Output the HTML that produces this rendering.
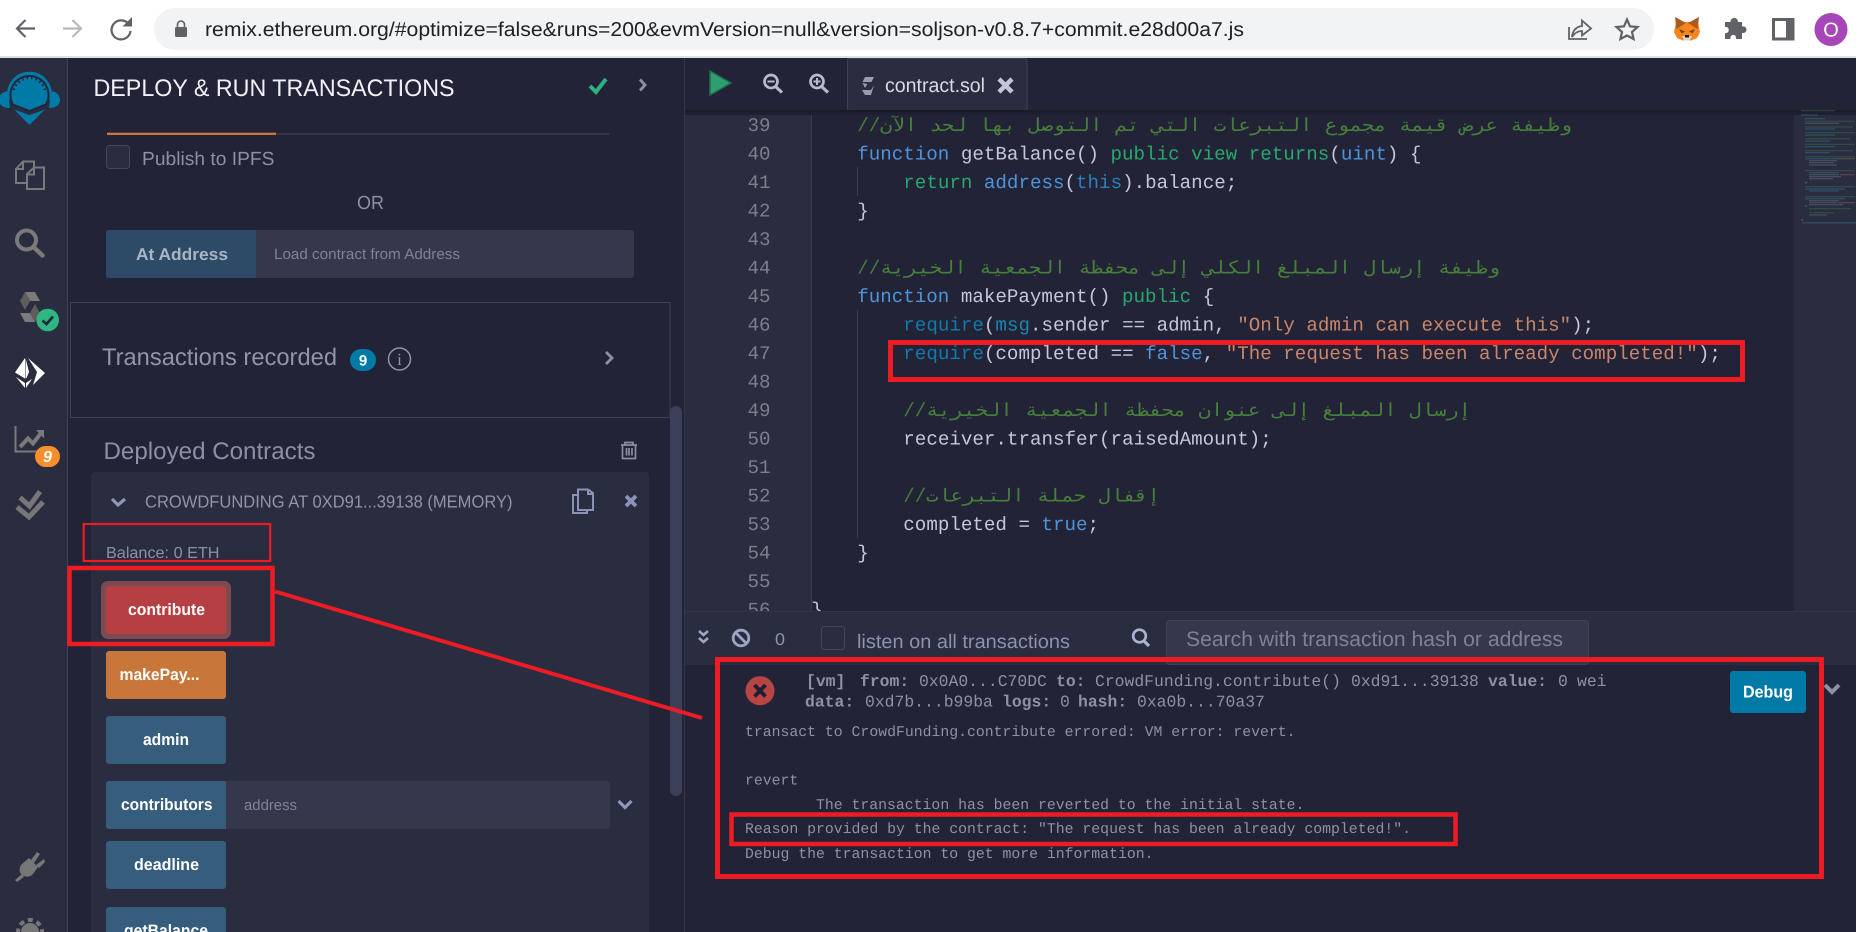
<!DOCTYPE html>
<html><head><meta charset="utf-8"><title>Remix</title>
<style>
html,body{margin:0;padding:0;background:#fff;width:1868px;height:932px;overflow:hidden}
svg{display:block}
text{white-space:pre;text-rendering:geometricPrecision}
.s{font-family:"Liberation Sans","DejaVu Sans",sans-serif}
.m{font-family:"Liberation Mono","DejaVu Sans Mono",monospace;font-size:19.2px;fill:#c3c6de}
.t{font-family:"Liberation Mono","DejaVu Sans Mono",monospace;font-size:16.4px;fill:#8e90a8}
.tb{font-family:"Liberation Mono","DejaVu Sans Mono",monospace;font-size:16.4px;fill:#8e90a8;font-weight:bold}
.l{font-family:"Liberation Mono","DejaVu Sans Mono",monospace;font-size:14.8px;fill:#8e90a8}
.n{font-family:"Liberation Mono",monospace;font-size:19.2px;fill:#7c7f8e}
.c{font-family:"DejaVu Sans Mono","DejaVu Sans",sans-serif;font-size:18px;fill:#467f3a}
.cs{font-family:"Liberation Mono",monospace;font-size:19.2px;fill:#467f3a}
.k{fill:#4e94d8}.g{fill:#27a86e}.r{fill:#0f7bab}.st{fill:#c9866a}.y{fill:#d8cfa8}
</style></head><body>
<svg width="1868" height="932" viewBox="0 0 1868 932" xmlns="http://www.w3.org/2000/svg">
<!-- browser chrome -->
<rect width="1868" height="932" fill="#fff"/>
<rect x="0" y="56" width="1856" height="2" fill="#dee1e6"/>
<rect x="154" y="8" width="1500" height="42" rx="21" fill="#f1f3f4"/>
<g fill="none" stroke-linecap="butt">
<path d="M35 28.500H17M25.500 20L17 28.500L25.500 37" stroke="#5f6368" stroke-width="2.200"/>
<path d="M63 28.500H81M72.500 20L81 28.500L72.500 37" stroke="#b6b9bd" stroke-width="2.200"/>
<path d="M128.500 24A9.500 9.500 0 1 0 130.500 31" stroke="#5f6368" stroke-width="2.200"/>
</g>
<path d="M122.500 26.500H132V17z" fill="#5f6368"/>
<rect x="175" y="27" width="12" height="10" rx="1.500" fill="#5f6368"/>
<path d="M177.500 27v-2.500a3.500 3.500 0 0 1 7 0V27" fill="none" stroke="#5f6368" stroke-width="1.600"/>
<text class="s" x="205" y="36" font-size="20" fill="#202124" textLength="1039" lengthAdjust="spacingAndGlyphs">remix.ethereum.org/#optimize=false&amp;runs=200&amp;evmVersion=null&amp;version=soljson-v0.8.7+commit.e28d00a7.js</text>
<g fill="none" stroke="#5f6368" stroke-width="1.800">
<path d="M1569 27V39H1587"/>
<path d="M1572 37C1572.500 30 1577 26.500 1582 26V20.500L1591 28.500L1582 35.500V31C1577.500 31 1574.500 33 1572 37Z"/>
<path d="M1627 19.500L1630 26.300L1637.500 27L1632 32L1633.600 39L1627 35.500L1620.400 39L1622 32L1616.500 27L1624 26.300Z" stroke-width="2.200"/>
</g>
<!-- fox -->
<g>
<path d="M1676 22H1698L1700 32L1697 38L1691 40.500H1683L1677 38L1674 32Z" fill="#f6851b"/>
<path d="M1675 17L1686 23L1676.500 29Z" fill="#a85a20"/>
<path d="M1699 17L1688 23L1697.500 29Z" fill="#a85a20"/>
<path d="M1679 29L1685 31.500L1681.500 33.500Z" fill="#6e431d"/><path d="M1695 29L1689 31.500L1692.500 33.500Z" fill="#6e431d"/>
<path d="M1682 36H1692L1690 40.500H1684Z" fill="#e4d3c3"/><rect x="1685" y="35" width="4" height="2.500" fill="#1c1108"/>
</g>
<path d="M1730.500 22C1730.500 16.500 1738 16.500 1738 22H1742V26.500C1748 25.500 1748 34 1742 33V39H1736C1737 33.500 1729.500 33.500 1730.500 39H1725V33C1730 34 1730 26 1725 27V22Z" fill="#5f6368"/>
<rect x="1773.500" y="19.500" width="19.500" height="19.500" fill="none" stroke="#5f6368" stroke-width="3"/><rect x="1786" y="19" width="8" height="20" fill="#5f6368"/>
<circle cx="1831" cy="29.500" r="16.500" fill="#a845b8"/>
<text class="s" x="1831" y="36.500" font-size="20" fill="#fff" text-anchor="middle">O</text>

<!-- app base -->
<rect x="0" y="58" width="1856" height="874" fill="#222336"/>
<rect x="0" y="58" width="67" height="874" fill="#2a2c3f"/>
<rect x="67" y="58" width="1" height="874" fill="#3f4156"/>

<!-- rail icons -->
<g>
<path d="M8 100C8 83 17 73.500 29.500 73.500C42 73.500 51 83 51 100" fill="none" stroke="#007aa6" stroke-width="3.500"/>
<path d="M8 91C2 92 -1 95 -1 100C-1 105 3 108 10 108Z" fill="#007aa6"/>
<path d="M51 91C57 92 60 95 60 100C60 105 56 108 49 108Z" fill="#007aa6"/>
<path d="M29.500 76A19 19 0 0 1 46 104.500L29.500 111L13 104.500A19 19 0 0 1 29.500 76Z" fill="#007aa6" stroke="#1f2740" stroke-width="2"/>
<path d="M14 90A16 16 0 0 1 45 90" fill="none" stroke="#1f2740" stroke-width="2.500" stroke-dasharray="1.500 3"/>
<path d="M14 109.500L29.500 115L45 109.500L29.500 125Z" fill="#007aa6"/>
</g>
<g fill="none" stroke="#7a7a7a" stroke-width="2">
<path d="M26 183H16V169L23 161.500H34V168"/>
<path d="M23 161.500V169H16"/>
<path d="M27 189V174L34 167.500H44V189Z"/>
<path d="M34 167.500V174.500H27"/>
<circle cx="26.500" cy="240" r="9.500" stroke-width="4"/>
<path d="M33.500 247L42.500 255.500" stroke-width="4.500" stroke-linecap="round"/>
</g>
<g fill="#6f6f6f">
<path d="M25 292H35L40 301H30Z" fill="#7a7a7a"/>
<path d="M25 292L20 301L25 310L30 301Z" fill="#5d5d5d"/>
<path d="M20 313L25 322H35L30 313Z" fill="#7a7a7a"/>
<path d="M35 304L40 313L35 322L30 313Z" fill="#5d5d5d"/>
</g>
<circle cx="47.700" cy="320" r="11.300" fill="#2eb683"/>
<path d="M42.500 320.500L46.500 324L53 316.500" fill="none" stroke="#1f2a38" stroke-width="2.800"/>
<g fill="#fff">
<path d="M25 358L15 372.500L25 378.500Z"/>
<path d="M25.500 358V378.500L26.500 378L29 372Z"/>
<path d="M28 358L45 373L33 385L37 372Z"/>
<path d="M16 377L25 383V388Z"/>
<path d="M26 383L32 379L26 388Z"/>
</g>
<g fill="none" stroke="#7a7a7a">
<path d="M15.500 426V451.500H37" stroke-width="2"/>
<path d="M20 447L28 438.500L33 443.500L41 433" stroke-width="4"/>
</g>
<path d="M36 430H44V438.500Z" fill="#7a7a7a"/>
<rect x="35" y="446" width="25" height="21" rx="10.500" fill="#f7902c"/>
<text class="s" x="47.500" y="462" font-size="16" font-weight="bold" font-style="italic" fill="#fff" text-anchor="middle">9</text>
<g fill="none" stroke="#777" stroke-width="5">
<path d="M20 497.500L29.500 506L40 491.500"/>
<path d="M17 507L29 517L43 502"/>
</g>
<g fill="#777">
<path d="M29 858L38 867L33 874C29 878 24 877 21 874C19 871 19 867 22 864Z"/>
<path d="M31 860L37 852L40 854L34 863ZM36 865L44 859L45 862L39 868Z"/>
<path d="M22 874L15 880L17 882L24 877Z"/>
<circle cx="30" cy="932" r="9"/>
</g>
<circle cx="30" cy="932" r="12" fill="none" stroke="#777" stroke-width="4" stroke-dasharray="5 4"/>

<!-- panel -->
<rect x="684" y="58" width="1" height="874" fill="#33354a"/>
<text class="s" x="93.500" y="96" font-size="24" fill="#f0f1f6" textLength="361" lengthAdjust="spacingAndGlyphs">DEPLOY &amp; RUN TRANSACTIONS</text>
<path d="M590 86L596 92L606 79" fill="none" stroke="#2eb07f" stroke-width="4"/>
<path d="M640 79.500L645 85L640 90.500" fill="none" stroke="#8e90a8" stroke-width="2.800"/>
<rect x="107" y="133" width="502" height="2" fill="#33354a"/>
<rect x="107" y="132.700" width="169" height="2.300" fill="#c8763a"/>
<rect x="106.500" y="145.500" width="23" height="23" rx="3" fill="#2a2c3f" stroke="#44465c"/>
<text class="s" x="142" y="165" font-size="19" fill="#8d8fa8" textLength="132.500" lengthAdjust="spacingAndGlyphs">Publish to IPFS</text>
<text class="s" x="357" y="209" font-size="19" fill="#8d8fa8" textLength="27" lengthAdjust="spacingAndGlyphs">OR</text>
<rect x="106" y="230" width="528" height="48" rx="3" fill="#35374c"/>
<path d="M109 230H256V278H109a3 3 0 0 1 -3 -3V233a3 3 0 0 1 3 -3Z" fill="#2d4a66"/>
<text class="s" x="136" y="260" font-size="17" font-weight="bold" fill="#a9b4c4" textLength="92" lengthAdjust="spacingAndGlyphs">At Address</text>
<text class="s" x="274" y="259" font-size="15" fill="#7f8296" textLength="186" lengthAdjust="spacingAndGlyphs">Load contract from Address</text>
<rect x="70.500" y="302.500" width="599.500" height="115" fill="none" stroke="#3f4156"/>
<text class="s" x="102" y="365" font-size="24" fill="#9295a8" textLength="235" lengthAdjust="spacingAndGlyphs">Transactions recorded</text>
<rect x="350" y="349" width="26" height="22" rx="11" fill="#007aa6"/>
<text class="s" x="363" y="365.500" font-size="15" font-weight="bold" fill="#fff" text-anchor="middle">9</text>
<circle cx="399.500" cy="359" r="11" fill="none" stroke="#9295a8" stroke-width="1.500"/>
<text x="399.500" y="365" font-family="Liberation Serif,serif" font-size="17" fill="#9295a8" text-anchor="middle">i</text>
<path d="M606 352L612 358L606 364" fill="none" stroke="#8e90a8" stroke-width="2.800"/>
<text class="s" x="103.500" y="459" font-size="24" fill="#8d8fa8" textLength="212" lengthAdjust="spacingAndGlyphs">Deployed Contracts</text>
<g fill="none" stroke="#8a8da3" stroke-width="1.700">
<path d="M621 445H637M625 445V442.500H633V445"/>
<path d="M622.500 445V458.500H635.500V445M626.500 448V455.500M629 448V455.500M632 448V455.500"/>
</g>
<rect x="91" y="472" width="558" height="470" rx="4" fill="#2a2c3f"/>
<rect x="670" y="406" width="12" height="390" rx="6" fill="#3c3f58"/>
<path d="M112 499L118 505L125 499" fill="none" stroke="#8e97b8" stroke-width="3.200"/>
<text class="s" x="145" y="507.500" font-size="17.500" fill="#9295a8" textLength="367.500" lengthAdjust="spacingAndGlyphs">CROWDFUNDING AT 0XD91...39138 (MEMORY)</text>
<g fill="none" stroke="#8a92b8" stroke-width="2">
<path d="M578 510H593V493L588 489.500H578Z"/>
<path d="M578 495H573V513H587V510"/>
<path d="M588 489.500V494H593"/>
</g>
<path d="M626 496L636 506M636 496L626 506" stroke="#8a92b8" stroke-width="3.800"/>
<text class="s" x="106" y="558" font-size="16" fill="#8d8fa8" textLength="113.500" lengthAdjust="spacingAndGlyphs">Balance: 0 ETH</text>

<rect x="101" y="581" width="130" height="58" rx="7" fill="#7d4a52"/>
<rect x="106" y="586" width="120" height="48" rx="3" fill="#b53f42"/>
<text class="s" x="128" y="615" font-size="16.500" font-weight="bold" fill="#fff" textLength="77" lengthAdjust="spacingAndGlyphs">contribute</text>
<rect x="106" y="651" width="120" height="48" rx="3" fill="#c8763a"/>
<text class="s" x="119.500" y="680" font-size="16.500" font-weight="bold" fill="#fff" textLength="80" lengthAdjust="spacingAndGlyphs">makePay...</text>
<rect x="106" y="716" width="120" height="48" rx="3" fill="#375d7d"/>
<text class="s" x="143" y="745" font-size="16.500" font-weight="bold" fill="#fff" textLength="46" lengthAdjust="spacingAndGlyphs">admin</text>
<rect x="106" y="781" width="504" height="48" rx="3" fill="#35374c"/>
<path d="M109 781H226V829H109a3 3 0 0 1 -3 -3V784a3 3 0 0 1 3 -3Z" fill="#375d7d"/>
<text class="s" x="121" y="810" font-size="16.500" font-weight="bold" fill="#fff" textLength="91.500" lengthAdjust="spacingAndGlyphs">contributors</text>
<text class="s" x="244" y="810" font-size="15" fill="#7f8296" textLength="53" lengthAdjust="spacingAndGlyphs">address</text>
<path d="M618.500 801L625 807.500L631.500 801" fill="none" stroke="#8e97b8" stroke-width="3.200"/>
<rect x="106" y="841" width="120" height="48" rx="3" fill="#375d7d"/>
<text class="s" x="134" y="870" font-size="16.500" font-weight="bold" fill="#fff" textLength="65" lengthAdjust="spacingAndGlyphs">deadline</text>
<rect x="106" y="907" width="120" height="48" rx="3" fill="#375d7d"/>
<text class="s" x="124" y="936" font-size="16.500" font-weight="bold" fill="#fff" textLength="84" lengthAdjust="spacingAndGlyphs">getBalance</text>

<!-- tab bar -->
<rect x="847.500" y="58.500" width="179.500" height="52" rx="2" fill="#2a2c3f" stroke="#3f4156"/>
<path d="M710 71L731 83L710 95Z" fill="#2e9e6f" stroke="#1f6d55" stroke-width="1.500"/>
<g fill="none" stroke="#b7bacd" stroke-width="2.700">
<circle cx="771" cy="81.500" r="6.500"/><path d="M775.500 86.500L782 92.500" stroke-width="3.200"/><path d="M767.500 81.500H774.500" stroke-width="2"/>
<circle cx="817" cy="81.500" r="6.500"/><path d="M821.500 86.500L828 92.500" stroke-width="3.200"/><path d="M813.500 81.500H820.500M817 78V85" stroke-width="2"/>
</g>
<g fill="#9a9cad">
<path d="M865 77H874L871.500 82H862.500Z"/><path d="M862.500 83L865 88L867.500 84Z"/><path d="M862 90H871L874 85L871 95H865Z"/>
</g>
<text class="s" x="885" y="92" font-size="20" fill="#d8dae5" textLength="100" lengthAdjust="spacingAndGlyphs">contract.sol</text>
<path d="M999 79L1012 92M1012 79L999 92" stroke="#c3c6d6" stroke-width="4.500"/>

<!-- editor -->
<rect x="685" y="110" width="126" height="501" fill="#2a2c3f"/>
<rect x="811" y="110" width="1" height="501" fill="#3a3c4e"/>
<rect x="1794" y="110" width="62" height="501" fill="#2a2c3f"/>
<rect x="685" y="110" width="1171" height="2" fill="#1a1b29"/>
<rect x="685" y="112" width="1171" height="3" fill="#1e1f30"/>
<rect x="857" y="167" width="1" height="29" fill="#3a3c4e"/>
<rect x="857" y="310" width="1" height="228" fill="#3a3c4e"/>

<!-- line numbers -->
<text class="n" x="747.500" y="131">39</text>
<text class="n" x="747.500" y="159.500">40</text>
<text class="n" x="747.500" y="188">41</text>
<text class="n" x="747.500" y="216.500">42</text>
<text class="n" x="747.500" y="245">43</text>
<text class="n" x="747.500" y="273.500">44</text>
<text class="n" x="747.500" y="302">45</text>
<text class="n" x="747.500" y="330.500">46</text>
<text class="n" x="747.500" y="359">47</text>
<text class="n" x="747.500" y="387.500">48</text>
<text class="n" x="747.500" y="416">49</text>
<text class="n" x="747.500" y="444.500">50</text>
<text class="n" x="747.500" y="473">51</text>
<text class="n" x="747.500" y="501.500">52</text>
<text class="n" x="747.500" y="530">53</text>
<text class="n" x="747.500" y="558.500">54</text>
<text class="n" x="747.500" y="587">55</text>
<text class="n" x="747.500" y="615.500">56</text>

<!-- code -->
<text class="cs" x="857.200" y="131">//</text>
<text class="c" x="880" y="131" textLength="692" lengthAdjust="spacingAndGlyphs">وظيفة عرض قيمة مجموع التبرعات التي تم التوصل بها لحد الآن</text>
<text class="m" x="857.200" y="159.500"><tspan class="k">function</tspan> getBalance() <tspan class="g">public view returns</tspan>(<tspan class="k">uint</tspan>) {</text>
<text class="m" x="903.300" y="188"><tspan class="g">return</tspan> <tspan class="k">address</tspan>(<tspan fill="#2a7fbd">this</tspan>).balance;</text>
<text class="m" x="857.200" y="216.500">}</text>
<text class="cs" x="857.200" y="273.500">//</text>
<text class="c" x="880" y="273.500" textLength="620" lengthAdjust="spacingAndGlyphs">وظيفة إرسال المبلغ الكلي إلى محفظة الجمعية الخيرية</text>
<text class="m" x="857.200" y="302"><tspan class="k">function</tspan> makePayment() <tspan class="g">public</tspan> {</text>
<text class="m" x="903.300" y="330.500"><tspan class="r">require</tspan>(<tspan fill="#1a86b0">msg</tspan>.sender == admin, <tspan class="st">"Only admin can execute this"</tspan>);</text>
<text class="m" x="903.300" y="359"><tspan class="r">require</tspan>(completed == <tspan class="k">false</tspan>, <tspan class="st">"The request has been already completed!"</tspan>);</text>
<text class="cs" x="903.300" y="416">//</text>
<text class="c" x="926" y="416" textLength="545" lengthAdjust="spacingAndGlyphs">إرسال المبلغ إلى عنوان محفظة الجمعية الخيرية</text>
<text class="m" x="903.300" y="444.500">receiver.transfer(raisedAmount);</text>
<text class="cs" x="903.300" y="501.500">//</text>
<text class="c" x="926" y="501.500" textLength="234" lengthAdjust="spacingAndGlyphs">إقفال حملة التبرعات</text>
<text class="m" x="903.300" y="530">completed = <tspan class="k">true</tspan>;</text>
<text class="m" x="857.200" y="558.500">}</text>
<text class="m" x="811.100" y="615.500">}</text>

<!-- minimap -->
<g fill="none" stroke-width="1" opacity=".6">
<path d="M1801 110.700h34M1805 121.300h50M1805 127h48M1805 132.700h50M1805 138.700h45M1805 144.300h50M1805 150.700h48M1805 156.700h50M1805 170.700h50M1805 186.700h50M1805 196.700h50M1809 208.700h42M1809 212.700h25" stroke="#3f6f46"/>
<path d="M1801 115h17M1805 118.700h20M1805 129h30M1805 135h30M1805 141h25M1805 146.700h30M1805 152.700h25M1805 158.700h30M1809 172.700h30M1805 189h40M1809 191h30M1805 198.700h40" stroke="#2a7a94"/>
<path d="M1805 123.300h34M1809 160.700h28M1809 162.700h25M1809 165h28M1809 174.700h30M1809 176.700h32M1809 178.700h24M1809 200.700h30M1809 202.700h28M1809 204.700h34M1809 215h18" stroke="#6f7388"/>
<path d="M1835 158.700h20M1840 174.700h15M1838 202.700h17" stroke="#8a6a5c"/>
<path d="M1805 182.700h2M1805 206h2M1801 220h2" stroke="#8a8da3"/>
</g>
<rect x="1802" y="222" width="54" height="1.500" fill="#2f4a63"/>

<!-- terminal -->
<rect x="685" y="611" width="1171" height="54" fill="#2a2c3f"/>
<rect x="685" y="611" width="1171" height="1" fill="#33354a"/>
<rect x="685" y="665" width="1171" height="267" fill="#222336"/>
<path d="M699 631L703.500 635L708 631M699 638L703.500 642L708 638" fill="none" stroke="#9ba6c4" stroke-width="2.600"/>
<circle cx="741" cy="638" r="7.800" fill="none" stroke="#9ba6c4" stroke-width="2.800"/>
<path d="M735.500 632.500L746.500 643.500" stroke="#9ba6c4" stroke-width="2.800"/>
<text class="s" x="775" y="645" font-size="17" fill="#8c93b0" textLength="10" lengthAdjust="spacingAndGlyphs">0</text>
<rect x="821.500" y="626.500" width="23" height="23" rx="3" fill="#2a2c3f" stroke="#44465c"/>
<text class="s" x="857" y="648" font-size="19.500" fill="#8c93b0" textLength="213" lengthAdjust="spacingAndGlyphs">listen on all transactions</text>
<circle cx="1139.500" cy="636" r="6.300" fill="none" stroke="#a9b4d0" stroke-width="2.700"/>
<path d="M1144 641L1149 646" stroke="#a9b4d0" stroke-width="3.200"/>
<rect x="1166.500" y="620.500" width="422" height="44" rx="3" fill="#35374c" stroke="#3f4156"/>
<text class="s" x="1186" y="646" font-size="21" fill="#7f8296" textLength="377" lengthAdjust="spacingAndGlyphs">Search with transaction hash or address</text>

<circle cx="760" cy="690.700" r="14.500" fill="#b84444"/>
<path d="M754.500 685L765.500 696.500M765.500 685L754.500 696.500" stroke="#1f2032" stroke-width="3.800"/>
<text class="tb" x="806" y="686">[vm]</text>
<text class="tb" x="860" y="686">from:</text>
<text class="t" x="919" y="686">0x0A0...C70DC</text>
<text class="tb" x="1056" y="686">to:</text>
<text class="t" x="1095" y="686">CrowdFunding.contribute()</text>
<text class="t" x="1351" y="686">0xd91...39138</text>
<text class="tb" x="1488" y="686">value:</text>
<text class="t" x="1558" y="686">0</text>
<text class="t" x="1577" y="686">wei</text>
<text class="tb" x="805" y="706.700">data:</text>
<text class="t" x="865" y="706.700">0xd7b...b99ba</text>
<text class="tb" x="1002" y="706.700">logs:</text>
<text class="t" x="1060" y="706.700">0</text>
<text class="tb" x="1078" y="706.700">hash:</text>
<text class="t" x="1137" y="706.700">0xa0b...70a37</text>
<rect x="1730" y="671" width="76" height="42" rx="3" fill="#0079a6"/>
<text class="s" x="1743" y="697.700" font-size="17" font-weight="bold" fill="#fff" textLength="50" lengthAdjust="spacingAndGlyphs">Debug</text>
<path d="M1825 685L1832 692L1839 685" fill="none" stroke="#8e90a8" stroke-width="4"/>
<text class="l" x="745" y="736">transact to CrowdFunding.contribute errored: VM error: revert.</text>
<text class="l" x="745" y="784.500">revert</text>
<text class="l" x="816" y="809">The transaction has been reverted to the initial state.</text>
<text class="l" x="745" y="832.800">Reason provided by the contract: "The request has been already completed!".</text>
<text class="l" x="745" y="858">Debug the transaction to get more information.</text>

<!-- red annotations -->
<g fill="none" stroke="#ed1c24">
<rect x="83.700" y="524" width="186.500" height="37" stroke-width="2.200"/>
<rect x="69.500" y="568" width="203" height="76" stroke-width="4.500"/>
<path d="M275 591.500L702 718" stroke-width="4"/>
<rect x="890.500" y="342.500" width="852" height="37" stroke-width="5"/>
<rect x="717.500" y="659.500" width="1104" height="217" stroke-width="5"/>
<rect x="731.500" y="814.500" width="724" height="29.500" stroke-width="4.500"/>
</g>
<rect x="1856" y="0" width="12" height="932" fill="#fff"/>
</svg>
</body></html>
